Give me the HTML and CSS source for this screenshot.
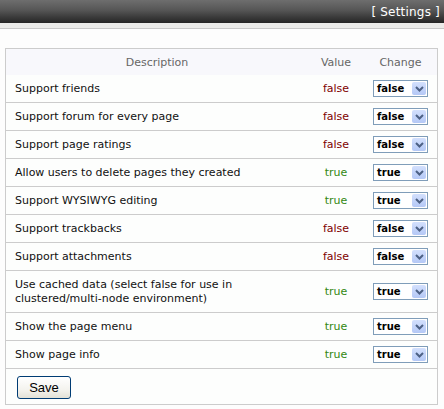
FILE: index.html
```html
<!DOCTYPE html>
<html>
<head>
<meta charset="utf-8">
<link rel="stylesheet" href="styles.css">
</head>
<body>
<div class="topbar"><span class="title">[ Settings ]</span></div>
<div class="band"></div>
<div class="content">
  <table class="settings">
    <thead>
      <tr>
        <th class="c-desc">Description</th>
        <th class="c-val">Value</th>
        <th class="c-chg">Change</th>
      </tr>
    </thead>
    <tbody>
      <tr><td class="c-desc">Support friends</td><td class="c-val v-false">false</td><td class="c-chg"><span class="sel"><span class="sel-text">false</span><span class="sel-btn"><svg width="9" height="6" viewBox="0 0 9 6"><path d="M1 1 L4.5 4.5 L8 1" fill="none" stroke="#4d6185" stroke-width="2"/></svg></span></span></td></tr>
      <tr><td class="c-desc">Support forum for every page</td><td class="c-val v-false">false</td><td class="c-chg"><span class="sel"><span class="sel-text">false</span><span class="sel-btn"><svg width="9" height="6" viewBox="0 0 9 6"><path d="M1 1 L4.5 4.5 L8 1" fill="none" stroke="#4d6185" stroke-width="2"/></svg></span></span></td></tr>
      <tr><td class="c-desc">Support page ratings</td><td class="c-val v-false">false</td><td class="c-chg"><span class="sel"><span class="sel-text">false</span><span class="sel-btn"><svg width="9" height="6" viewBox="0 0 9 6"><path d="M1 1 L4.5 4.5 L8 1" fill="none" stroke="#4d6185" stroke-width="2"/></svg></span></span></td></tr>
      <tr><td class="c-desc">Allow users to delete pages they created</td><td class="c-val v-true">true</td><td class="c-chg"><span class="sel"><span class="sel-text">true</span><span class="sel-btn"><svg width="9" height="6" viewBox="0 0 9 6"><path d="M1 1 L4.5 4.5 L8 1" fill="none" stroke="#4d6185" stroke-width="2"/></svg></span></span></td></tr>
      <tr><td class="c-desc">Support WYSIWYG editing</td><td class="c-val v-true">true</td><td class="c-chg"><span class="sel"><span class="sel-text">true</span><span class="sel-btn"><svg width="9" height="6" viewBox="0 0 9 6"><path d="M1 1 L4.5 4.5 L8 1" fill="none" stroke="#4d6185" stroke-width="2"/></svg></span></span></td></tr>
      <tr><td class="c-desc">Support trackbacks</td><td class="c-val v-false">false</td><td class="c-chg"><span class="sel"><span class="sel-text">false</span><span class="sel-btn"><svg width="9" height="6" viewBox="0 0 9 6"><path d="M1 1 L4.5 4.5 L8 1" fill="none" stroke="#4d6185" stroke-width="2"/></svg></span></span></td></tr>
      <tr><td class="c-desc">Support attachments</td><td class="c-val v-false">false</td><td class="c-chg"><span class="sel"><span class="sel-text">false</span><span class="sel-btn"><svg width="9" height="6" viewBox="0 0 9 6"><path d="M1 1 L4.5 4.5 L8 1" fill="none" stroke="#4d6185" stroke-width="2"/></svg></span></span></td></tr>
      <tr><td class="c-desc">Use cached data (select false for use in<br>clustered/multi-node environment)</td><td class="c-val v-true">true</td><td class="c-chg"><span class="sel"><span class="sel-text">true</span><span class="sel-btn"><svg width="9" height="6" viewBox="0 0 9 6"><path d="M1 1 L4.5 4.5 L8 1" fill="none" stroke="#4d6185" stroke-width="2"/></svg></span></span></td></tr>
      <tr><td class="c-desc">Show the page menu</td><td class="c-val v-true">true</td><td class="c-chg"><span class="sel"><span class="sel-text">true</span><span class="sel-btn"><svg width="9" height="6" viewBox="0 0 9 6"><path d="M1 1 L4.5 4.5 L8 1" fill="none" stroke="#4d6185" stroke-width="2"/></svg></span></span></td></tr>
      <tr><td class="c-desc">Show page info</td><td class="c-val v-true">true</td><td class="c-chg"><span class="sel"><span class="sel-text">true</span><span class="sel-btn"><svg width="9" height="6" viewBox="0 0 9 6"><path d="M1 1 L4.5 4.5 L8 1" fill="none" stroke="#4d6185" stroke-width="2"/></svg></span></span></td></tr>
      <tr class="actions"><td colspan="3"><button class="save">Save</button></td></tr>
    </tbody>
  </table>
</div>
</body>
</html>
```
FILE: styles.css
```css
html, body {
  margin: 0;
  padding: 0;
  background: #fdfdfd;
  font-family: "DejaVu Sans", Verdana, sans-serif;
  font-size: 11px;
  color: #111;
}
.topbar {
  height: 23px;
  background: linear-gradient(to bottom, #6e6e6e 0%, #555 45%, #3a3a3a 75%, #262626 100%);
  display: flex;
  justify-content: flex-end;
  align-items: center;
  padding-right: 4px;
}
.title {
  color: #fff;
  font-size: 12px;
  letter-spacing: 0.2px;
}
.band {
  height: 5px;
  background: #ebebe9;
  border-bottom: 1px solid #c8c8c8;
}
.content {
  padding: 19px 6px 0 5px;
}
.settings {
  width: 433px;
  border: 1px solid #cccccc;
  border-collapse: collapse;
  background: #fdfefd;
}
.settings th {
  background: #f8f8fc;
  color: #666;
  font-weight: normal;
  height: 26px;
  padding: 0;
  vertical-align: middle;
}
.settings td {
  border-bottom: 1px solid #cccccc;
  padding: 7px 0 6px;
  line-height: 14px;
  vertical-align: middle;
}
.c-desc { text-align: left; padding-left: 9px !important; }
th.c-desc { text-align: center; padding-left: 0 !important; width: 302px; }
.c-val { text-align: center; width: 56px; }
.c-chg { text-align: center; width: 73px; }
.v-false { color: #800000; }
.v-true { color: #338811; }
.sel {
  display: inline-block;
  position: relative;
  width: 53px;
  height: 15px;
  border: 1px solid #7f9db9;
  background: #fff;
  vertical-align: middle;
  margin: -2px 0 -1px;
  text-align: left;
  line-height: 15px;
}
.sel-text {
  padding-left: 3px;
  font-weight: bold;
  font-size: 10px;
  color: #000;
}
.sel-btn {
  position: absolute;
  right: 1px;
  top: 1px;
  width: 14px;
  height: 13px;
  border-radius: 2px;
  background: linear-gradient(to bottom, #d3e0fd, #b4c8f6);
  display: flex;
  align-items: center;
  justify-content: center;
}
.actions td {
  border-bottom: none;
  padding: 7px 0 5px 11px;
}
.save {
  width: 54px;
  height: 23px;
  border: 1px solid #003c74;
  border-radius: 3px;
  background: linear-gradient(to bottom, #ffffff 0%, #f4f3ee 60%, #e3e1d6 100%);
  font-family: "Liberation Sans", Arial, sans-serif;
  font-size: 13px;
  color: #000;
  padding: 0;
}
```
